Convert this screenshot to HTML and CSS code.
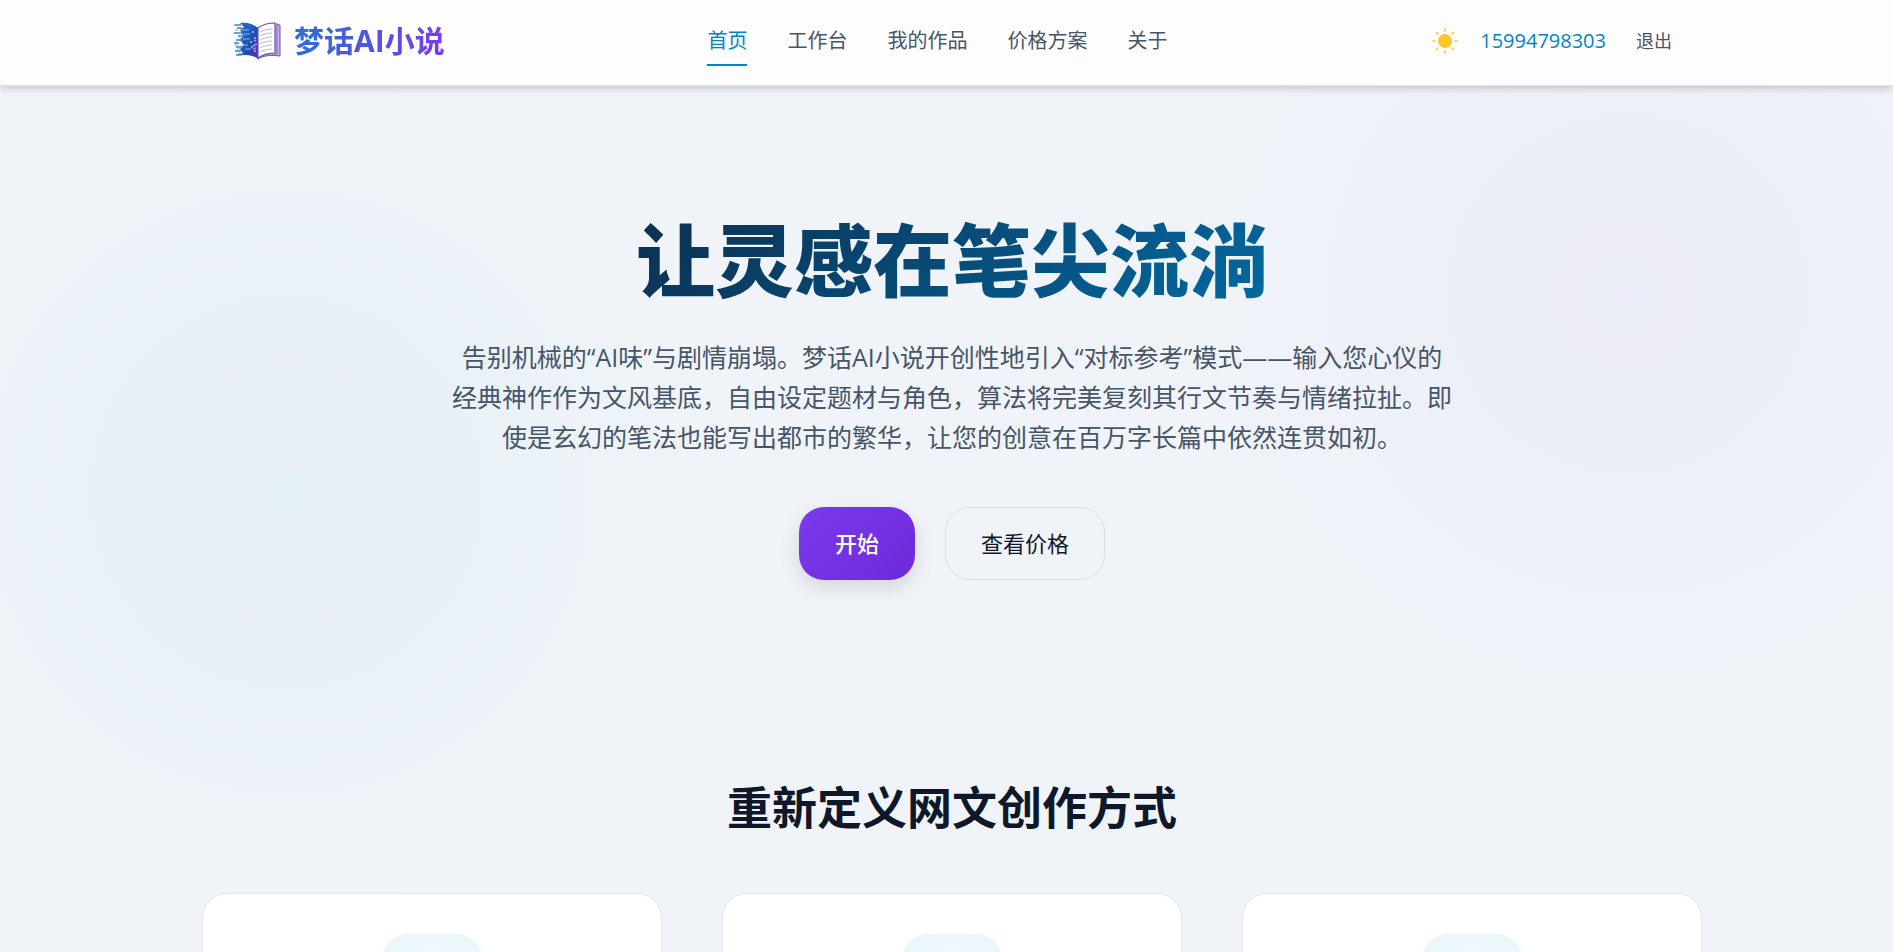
FILE: index.html
```html
<!DOCTYPE html>
<html lang="zh-CN">
<head>
    <meta charset="UTF-8">
    <meta name="viewport" content="width=device-width, initial-scale=1.0">
    <title>梦话AI小说</title>
    <link rel="stylesheet" href="styles.css">
</head>
<body>
    <header class="header">
        <div class="container header-inner">
            <a href="#" class="logo">
                <svg class="logo-icon" viewBox="0 0 50 42" aria-hidden="true">
                    <defs>
                        <linearGradient id="page" x1="0" y1="0" x2="1" y2="1">
                            <stop offset="0" stop-color="#2f6fd0"/>
                            <stop offset="0.6" stop-color="#1e4fb0"/>
                            <stop offset="1" stop-color="#5b2fa8"/>
                        </linearGradient>
                    </defs>
                    <path d="M8 3c8-1 13 1 18 5v31c-5-4-12-5-20-3l5-3-3-4 4-4-4-5 3-5-3-5 4-3z" fill="url(#page)"/>
                    <path d="M3 5h6M5 8h5M2 13h8M6 16h6M4 20h8M2 23h5M4 27h7M3 31h6M6 34h6M4 35h3" stroke="#3b7fdc" stroke-width="1.4"/>
                    <path d="M1 5h2M3 10h3M9 10h8M6 17h5M11 19h7M3 25h3M9 25h7M13 29h6M5 29h3M12 14h6" stroke="#6fb7ee" stroke-width="1.2"/>
                    <path d="M20 12h2M18 22h2M22 18h2M19 27h2M22 31h2" stroke="#8fd0f5" stroke-width="1.4"/>
                    <path d="M25 24l-4 2M24 28l-3 1M24 21l-2-1" stroke="#d27bf0" stroke-width="1.6"/>
                    <path d="M44 4h2v1h2v31c-8-1-16-1-22 3" fill="#c4b2e2" stroke="#7a4fae" stroke-width="1"/>
                    <path d="M45 5v29c-7-1-13 0-19 5" fill="none" stroke="#8a63bd" stroke-width="1"/>
                    <path d="M26 8c5-4 10-5 17-5v30c-7 0-12 1-17 5z" fill="#fff" stroke="#6a4fae" stroke-width="1.2"/>
                    <path d="M28 12c4-2 8-3 12-3M28 16c4-2 8-3 12-3M28 20c4-2 8-3 12-3M28 24c4-2 8-3 12-3M28 28c4-2 8-3 12-3M28 32c4-2 8-3 12-3" fill="none" stroke="#b3aed6" stroke-width="0.9"/>
                </svg>
                <span class="logo-text">梦话AI小说</span>
            </a>
            <nav class="nav">
                <a href="#" class="nav-link active">首页</a>
                <a href="#" class="nav-link">工作台</a>
                <a href="#" class="nav-link">我的作品</a>
                <a href="#" class="nav-link">价格方案</a>
                <a href="#" class="nav-link">关于</a>
            </nav>
            <div class="user">
                <button class="theme-btn" aria-label="切换主题">
                    <svg viewBox="0 0 26 26" aria-hidden="true">
                        <circle cx="13" cy="13" r="7" fill="#fbc62c"/>
                        <path d="M13 1v2M13 23v2M1 13h2M23 13h2M4.5 4.5l1.5 1.5M20 20l1.5 1.5M4.5 21.5l1.5-1.5M20 6l1.5-1.5" stroke="#fbc62c" stroke-width="1.6" stroke-linecap="round"/>
                    </svg>
                </button>
                <a href="#" class="phone">15994798303</a>
                <button class="logout-btn">退出</button>
            </div>
        </div>
    </header>

    <main>
        <section class="hero">
            <h1>让灵感在笔尖流淌</h1>
            <p>告别机械的“AI味”与剧情崩塌。梦话AI小说开创性地引入“对标参考”模式——输入您心仪的经典神作作为文风基底，自由设定题材与角色，算法将完美复刻其行文节奏与情绪拉扯。即使是玄幻的笔法也能写出都市的繁华，让您的创意在百万字长篇中依然连贯如初。</p>
            <div class="hero-buttons">
                <button class="btn btn-primary">开始</button>
                <button class="btn btn-outline">查看价格</button>
            </div>
        </section>

        <section class="features container">
            <h2>重新定义网文创作方式</h2>
            <div class="cards">
                <div class="card"><div class="card-icon"></div></div>
                <div class="card"><div class="card-icon"></div></div>
                <div class="card"><div class="card-icon"></div></div>
            </div>
        </section>
    </main>
</body>
</html>
```
FILE: styles.css
```css
* {
    box-sizing: border-box;
}
html {
    scrollbar-width: none;
}
body {
    min-height: 100vh;
    margin: 0;
    font-family: "Open Sans", "Noto Sans CJK SC", sans-serif;
    color: #0f172a;
    background:
        radial-gradient(circle at 287px 492px, rgba(8, 145, 198, 0.05), transparent 430px),
        radial-gradient(circle at 86% 294px, rgba(124, 58, 237, 0.04), transparent 460px),
        #f0f4f8;
}
a {
    text-decoration: none;
}
button {
    font-family: inherit;
    cursor: pointer;
}
.container {
    max-width: 1500px;
    margin: 0 auto;
}
.header {
    padding-left: 11px;
    background-color: #fdfdfe;
    border-bottom: 1px solid #dfe3e6;
    box-shadow: 0 2px 8px rgba(0, 0, 0, 0.2);
}
.header-inner {
    height: 85px;
    padding: 0 30px 3px;
    display: flex;
    justify-content: space-between;
    align-items: center;
}
.logo {
    display: flex;
    align-items: center;
    gap: 12px;
}
.logo-icon {
    width: 50px;
    height: 42px;
}
.logo-text {
    font-size: 30px;
    font-weight: 700;
    line-height: 40px;
    background: linear-gradient(90deg, #2a6fd6, #7c3aed);
    -webkit-background-clip: text;
    background-clip: text;
    color: transparent;
}
.nav {
    display: flex;
    gap: 40px;
}
.nav-link {
    padding: 10px 0 8px;
    font-size: 20px;
    line-height: 30px;
    color: #475569;
    border-bottom: 2px solid transparent;
}
.nav-link.active {
    color: #0284c7;
    border-bottom-color: #0284c7;
}
.user {
    display: flex;
    align-items: center;
}
.theme-btn {
    width: 30px;
    height: 30px;
    padding: 2px;
    margin-right: 20px;
    border: none;
    background: none;
}
.theme-btn svg {
    display: block;
    width: 26px;
    height: 26px;
}
.phone {
    margin-right: 30px;
    font-size: 20px;
    line-height: 30px;
    color: #0284c7;
}
.logout-btn {
    padding: 0;
    border: none;
    background: none;
    font-size: 18px;
    line-height: 30px;
    color: #475569;
}
.hero {
    padding: 121px 0 120px 11px;
    display: flex;
    flex-direction: column;
    align-items: center;
    text-align: center;
}
.hero h1 {
    margin: 0 0 22px;
    font-size: 79px;
    font-weight: 900;
    line-height: 108px;
    background: linear-gradient(135deg, #0c2f50, #0369a1);
    -webkit-background-clip: text;
    background-clip: text;
    color: transparent;
}
.hero p {
    max-width: 1000px;
    margin: 0 0 50px;
    font-size: 25px;
    line-height: 40px;
    color: #475569;
}
.hero-buttons {
    display: flex;
    gap: 30px;
}
.btn {
    padding: 20px 35px;
    font-size: 22px;
    line-height: 31px;
    border: 1px solid transparent;
    border-radius: 25px;
}
.btn-primary {
    color: #fff;
    font-weight: 500;
    background: linear-gradient(135deg, #7c3aed, #6d28d9) border-box;
    box-shadow: 0 8px 20px rgba(0, 0, 0, 0.12);
}
.btn-outline {
    color: #0f172a;
    background: none;
    border-color: #dadee4;
}
.features {
    max-width: 1511px;
    padding: 78px 0 60px 11px;
}
.features h2 {
    margin: 0 0 55px;
    font-size: 45px;
    font-weight: 700;
    line-height: 60px;
    text-align: center;
}
.cards {
    display: grid;
    grid-template-columns: repeat(3, 1fr);
    gap: 60px;
}
.card {
    padding: 40px;
    background-color: #fff;
    border: 1px solid #e5e7ea;
    border-radius: 25px;
}
.card-icon {
    width: 100px;
    height: 100px;
    margin: 0 auto;
    border-radius: 25px;
    background: radial-gradient(circle, #f5fbfd, #e8f5fa);
}
```
